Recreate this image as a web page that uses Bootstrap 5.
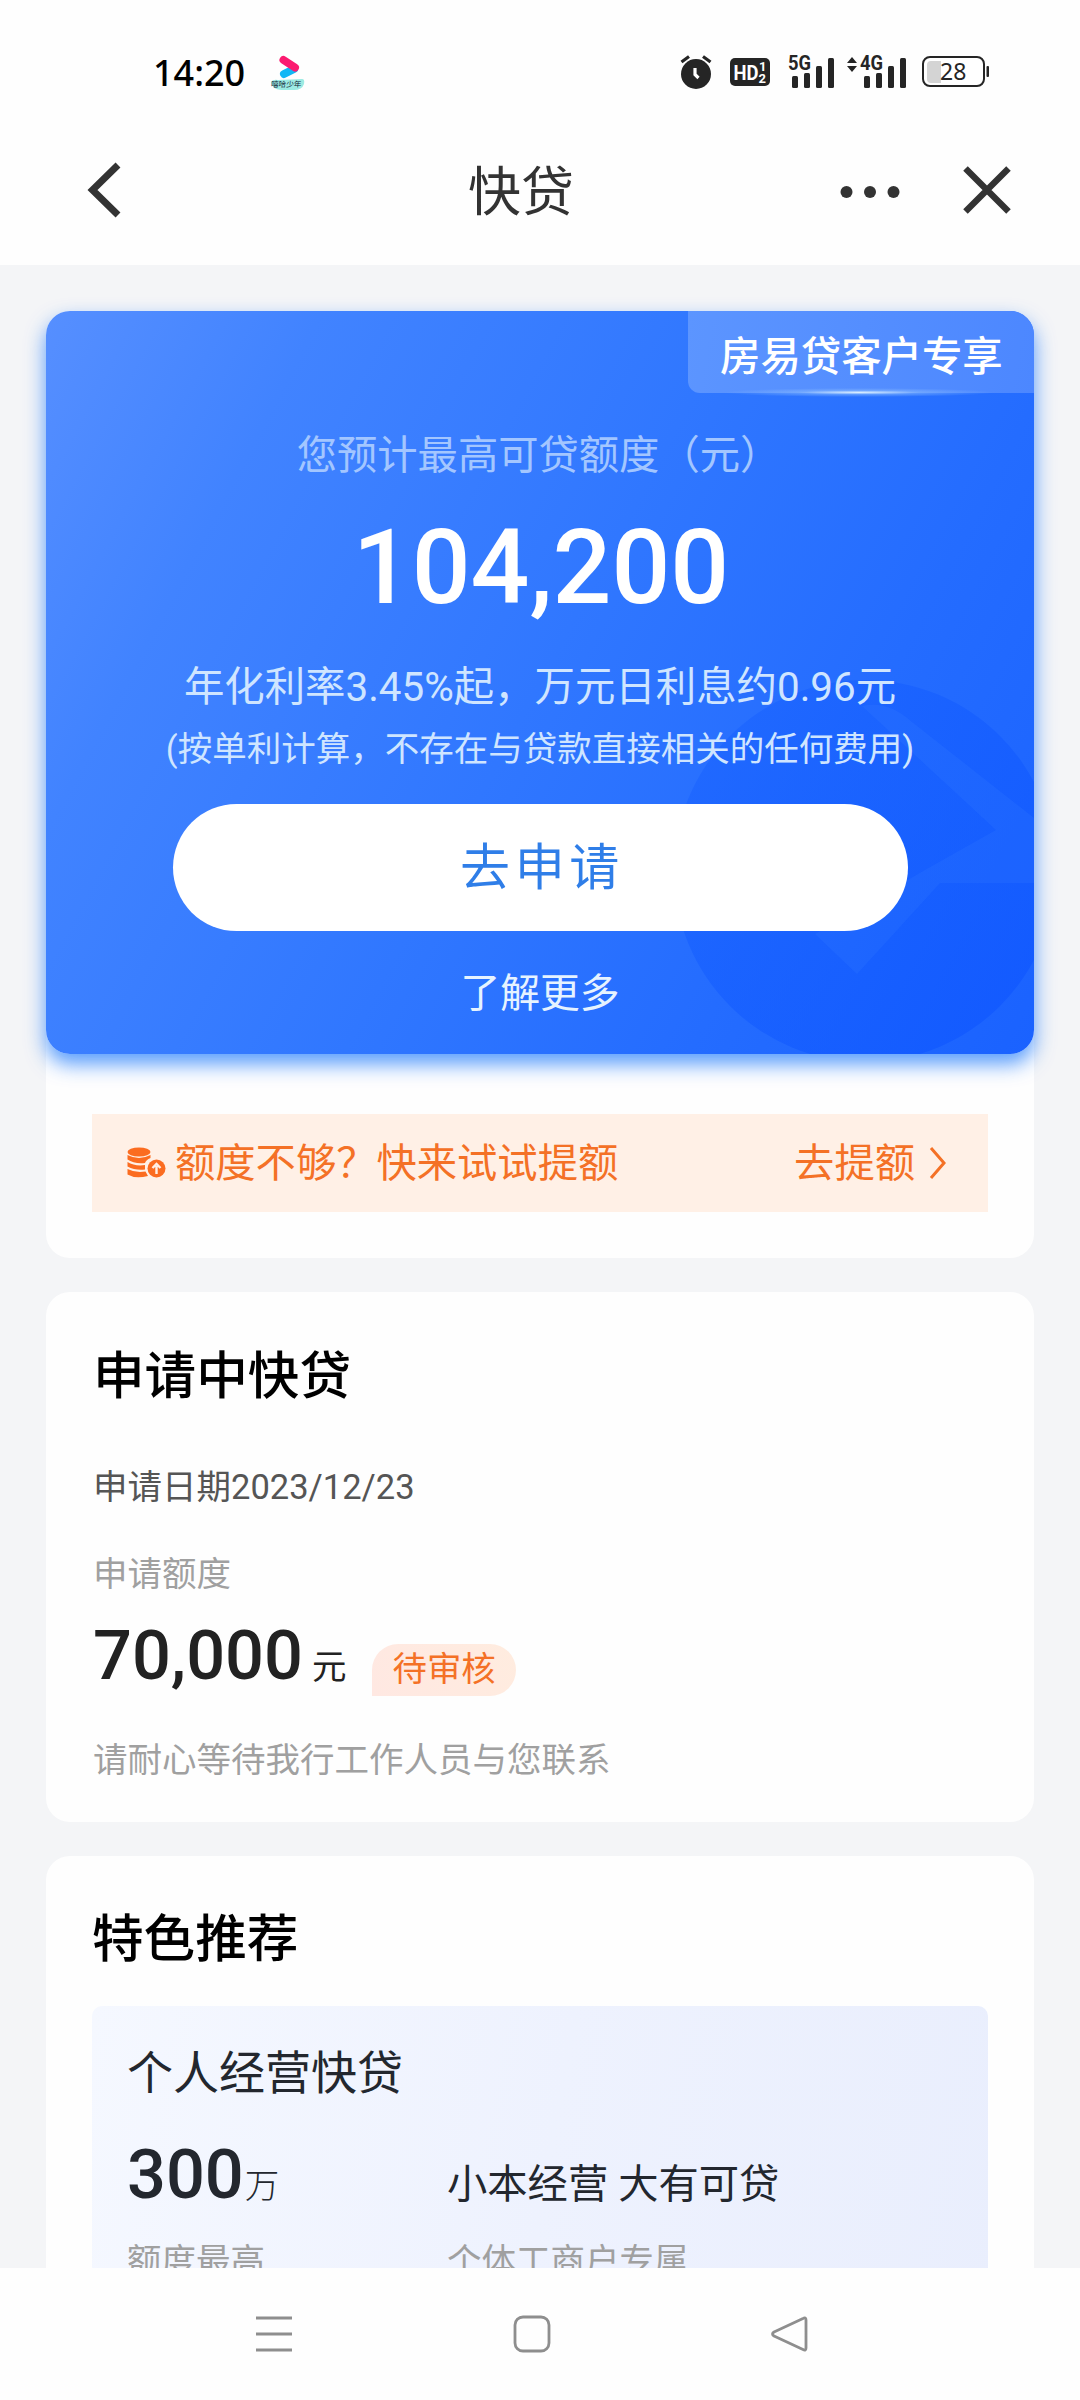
<!DOCTYPE html>
<html lang="zh-CN">
<head>
<meta charset="utf-8">
<meta name="viewport" content="width=device-width, initial-scale=1">
<title>快贷</title>
<link href="https://cdn.jsdelivr.net/npm/bootstrap@5.3.0/dist/css/bootstrap.min.css" rel="stylesheet">
<style>
  body { font-family: Roboto, "Noto Sans CJK SC", sans-serif; height: 2400px; background: #f4f5f7; color: #222; overflow: hidden; }
  svg { display: block; flex: none; overflow: visible; }
  .top-area { height: 265px; background: #fefefe; }
  .status-row { height: 144px; padding: 0 90px 0 153px; }
  .status-time { font: 500 36px/40px "Noto Sans", sans-serif; color: #000; width: 116px; padding-top: 2px; }
  .title-row { height: 94px; padding: 0 68px 0 87px; }
  .page-title { font-size: 53px; line-height: 60px; color: #333; width: 106px; margin-left: 347px; margin-right: 266px; padding-top: 4px; }
  .scroll-area { padding: 46px 46px 0; gap: 34px; height: 2003px; }
  .panel { border: 0; border-radius: 24px; background: #fefefe; flex: none; }
  .hero { height: 743px; border-radius: 24px; background: linear-gradient(118deg, #568fff 0%, #4183ff 20%, #3077ff 50%, #246cff 75%, #1a62ff 100%); box-shadow: 0 10px 20px rgba(22, 118, 252, .72); color: #fff; }
  .hero-mark { right: 0; bottom: 0; }
  .ribbon { top: 0; right: 0; width: 346px; height: 82px; padding-left: 32px; font-size: 40.4px; line-height: 93px; font-weight: 500; background: linear-gradient(100deg, #5c95ff, #4c87ff); border-radius: 0 24px 0 12px; }
  .ribbon-glow { right: 40px; top: 77px; width: 270px; height: 9px; background: radial-gradient(closest-side, rgba(225, 243, 255, .95), rgba(140, 190, 255, .5) 45%, rgba(120, 170, 255, 0)); }
  .hero-body { padding-top: 115px; }
  .hero-label { font-size: 40.3px; line-height: 60px; color: #a3c6ff; padding-right: 3px; }
  .hero-amount { font-size: 103.6px; line-height: 120px; font-weight: 500; margin-top: 22px; padding-left: 2px; }
  .hero-rate { font-size: 40.4px; line-height: 60px; color: #cfe5ff; margin-top: 30px; }
  .hero-note { font-size: 34.5px; line-height: 50px; color: #cfe5ff; margin-top: 6px; }
  .apply-btn { width: 735px; height: 127px; margin-top: 30px; border: 0; background: #fff; color: #2f7ee8; font-size: 50px; letter-spacing: 4.7px; line-height: 129px; padding: 0 0 0 4px; }
  .more-link { font-size: 39.8px; line-height: 60px; color: #e6f3ff; margin-top: 33px; }
  .boost { margin: 60px 46px 46px; height: 98px; padding: 0 41px 0 34px; background: #fff0e6; color: #f47126; font-size: 40.3px; }
  .boost span { padding-top: 2px; }
  .sect-title { font-size: 51.6px; line-height: 70px; font-weight: 500; color: #000; }
  .txt-s { font-size: 34.5px; line-height: 50px; }
  .gray { color: #a0a0a0; }
  .pending { height: 530px; padding: 50px 47px 0; }
  .num { font-size: 68.5px; font-weight: 500; line-height: 80px; }
  .pill { height: 52px; line-height: 51px; padding: 0 20px; border-radius: 26px 26px 26px 0; background: linear-gradient(60deg, #ffe8e2, #ffecdf); color: #f47126; font-size: 34.4px; }
  .special { padding: 49px 46px 0; height: 500px; }
  .offer { height: 400px; margin-top: 31px; padding: 37px 35px 0; border-radius: 10px; background: linear-gradient(100deg, #f5f8ff, #eef2fe 50%, #e9eefd); color: #23272e; }
  .offer-name { font-size: 46px; line-height: 60px; }
  .offer-col { width: 320px; }
  .offer-slogan { font-size: 40.3px; line-height: 60px; margin-top: 20px; font-weight: 400; }
  .bottom-nav { height: 132px; background: #fefefe; padding: 47px 0 0 255px; gap: 220px; }
</style>
<script src="https://cdn.jsdelivr.net/npm/bootstrap@5.3.0/dist/js/bootstrap.bundle.min.js"></script>
</head>
<body class="d-flex flex-column">

<header class="top-area flex-shrink-0">
  <div class="status-row d-flex align-items-center">
    <div class="status-time">14:20</div>
    <svg width="38" height="36" viewBox="0 0 38 36" style="margin-top:4px">
      <path d="M15 18 L25 13" stroke="#10b7f5" stroke-width="8" stroke-linecap="round"/>
      <path d="M14.500 4 L26 11.500" stroke="#fb1b70" stroke-width="8" stroke-linecap="round"/>
      <path d="M2 26 Q4 23 9 24 L33 23 Q36 23 35 28 Q33 34 25 34 L12 34 Q3 33 2 26Z" fill="#9debe3"/>
      <text x="5" y="31" font-family="Noto Sans CJK SC, sans-serif" font-size="7.600" fill="#123" transform="skewX(-6)">嘻哈少年</text>
    </svg>
    <div class="d-flex align-items-center ms-auto">
      <svg width="32" height="36" viewBox="0 0 32 36">
        <circle cx="16" cy="20" r="15" fill="#252525"/>
        <path d="M1.500 8 L9 2.500 M30.500 8 L23 2.500" stroke="#252525" stroke-width="3.200"/>
        <path d="M15 14 V20.500 L18.500 24" stroke="#fff" stroke-width="3.200" fill="none"/>
      </svg>
      <svg width="40" height="28" viewBox="0 0 40 28" style="margin-left:18px">
        <rect width="40" height="28" rx="5" fill="#252525"/>
        <text x="3.500" y="21.500" font-family="Roboto" font-weight="700" font-size="21" textLength="25" lengthAdjust="spacingAndGlyphs" fill="#fff">HD</text>
        <text x="29" y="13" font-family="Roboto" font-weight="700" font-size="13" fill="#fff">1</text>
        <text x="28.500" y="25" font-family="Roboto" font-weight="700" font-size="13" fill="#fff">2</text>
      </svg>
      <svg width="47" height="34" viewBox="0 0 47 34" style="margin-left:18px">
        <text x="0" y="15" font-family="Roboto" font-weight="700" font-size="20" textLength="23" lengthAdjust="spacingAndGlyphs" fill="#252525">5G</text>
        <g fill="#252525"><rect x="4" y="21" width="6" height="12" rx="1.500"/><rect x="16" y="18" width="6" height="15" rx="1.500"/><rect x="28" y="11" width="6" height="22" rx="1.500"/><rect x="40" y="3" width="6" height="30" rx="1.500"/></g>
      </svg>
      <svg width="61" height="34" viewBox="0 0 61 34" style="margin-left:11px">
        <path d="M1 8 L6 2 L11 8Z M1 11 L6 17 L11 11Z" fill="#252525"/>
        <text x="14" y="15" font-family="Roboto" font-weight="700" font-size="20" textLength="23" lengthAdjust="spacingAndGlyphs" fill="#252525">4G</text>
        <g fill="#252525"><rect x="18" y="21" width="6" height="12" rx="1.500"/><rect x="30" y="18" width="6" height="15" rx="1.500"/><rect x="42" y="11" width="6" height="22" rx="1.500"/><rect x="54" y="3" width="6" height="30" rx="1.500"/></g>
      </svg>
      <svg width="68" height="32" viewBox="0 0 68 32" style="margin-left:15px">
        <rect x="1" y="1" width="61" height="29" rx="7" fill="#fff" stroke="#252525" stroke-width="2"/>
        <path d="M9 5 H19 V27 H9 Q5 27 5 23 V9 Q5 5 9 5Z" fill="#d4d4d4"/>
        <rect x="64.500" y="10" width="2.500" height="11" rx="1" fill="#252525"/>
        <text x="18" y="24" font-family="Noto Sans" font-size="23" fill="#252525">28</text>
      </svg>
    </div>
  </div>
  <div class="title-row d-flex align-items-center">
    <svg width="34" height="56" viewBox="0 0 34 56"><path d="M31 2 L5.500 27 L31 52" fill="none" stroke="#333" stroke-width="7"/></svg>
    <div class="page-title text-nowrap">快贷</div>
    <svg width="60" height="14" viewBox="0 0 60 14"><g fill="#333"><circle cx="6.500" cy="8" r="6"/><circle cx="30" cy="8" r="6"/><circle cx="53.500" cy="8" r="6"/></g></svg>
    <svg width="50" height="50" viewBox="0 0 50 50" class="ms-auto"><path d="M3.500 2.500 L46.500 45.500 M46.500 2.500 L3.500 45.500" stroke="#333" stroke-width="6.400"/></svg>
  </div>
</header>

<main class="scroll-area d-flex flex-column overflow-hidden">
  <section class="panel">
    <div class="hero position-relative">
      <svg class="hero-mark position-absolute" width="374" height="400" viewBox="660 654 374 400">
        <defs>
          <clipPath id="corner"><path d="M660 654 H1034 V1030 Q1034 1054 1010 1054 H660Z"/></clipPath>
          <linearGradient id="disc" x1="0" y1="0" x2="1" y2="1"><stop offset="0" stop-color="#0a55ff" stop-opacity=".25"/><stop offset="1" stop-color="#0a50ff" stop-opacity=".5"/></linearGradient>
        </defs>
        <g clip-path="url(#corner)">
          <circle cx="865" cy="871" r="191" fill="url(#disc)"/>
          <path d="M862 706 Q888 700 912 722 L1034 818 V883 H940 L857 974 L815 934 L925 870 L996 830 Z" fill="#4a8cff" opacity=".14"/>
        </g>
      </svg>
      <div class="ribbon position-absolute text-nowrap">房易贷客户专享</div>
      <div class="ribbon-glow position-absolute"></div>
      <div class="hero-body position-relative d-flex flex-column align-items-center text-nowrap">
        <div class="hero-label">您预计最高可贷额度（元）</div>
        <div class="hero-amount">104,200</div>
        <div class="hero-rate">年化利率3.45%起，万元日利息约0.96元</div>
        <div class="hero-note">(按单利计算，不存在与贷款直接相关的任何费用)</div>
        <button class="apply-btn btn rounded-pill" type="button">去申请</button>
        <div class="more-link">了解更多</div>
      </div>
    </div>
    <div class="boost d-flex align-items-center text-nowrap">
      <svg width="41" height="34" viewBox="0 0 41 34">
        <g fill="#fb6c20">
          <ellipse cx="13" cy="6" rx="11.500" ry="4.500"/>
          <path d="M1.500 9 Q13 15 24.500 9 V12 Q20 14 19 17 Q8 18 1.500 13.500Z M1.500 16 Q9 20.500 19 19 V23.500 Q9 24.500 1.500 20.500Z M1.500 23 Q9 27 19.500 25.500 L22 30 Q9 33 1.500 28.500Z"/>
          <circle cx="30.500" cy="22.500" r="9"/>
        </g>
        <path d="M30.500 28 V20 M26.500 22 L30.500 18 L34.500 22" stroke="#fff0e6" stroke-width="2.400" fill="none"/>
      </svg>
      <span class="ms-2">额度不够？快来试试提额</span>
      <span class="ms-auto">去提额</span>
      <svg width="18" height="34" viewBox="0 0 18 34" style="margin-left:14px"><path d="M2 2 L15 17 L2 32" fill="none" stroke="#f47126" stroke-width="3"/></svg>
    </div>
  </section>

  <section class="panel pending text-nowrap">
    <h2 class="sect-title mb-0">申请中快贷</h2>
    <div class="txt-s" style="margin-top:50px;color:#555">申请日期2023/12/23</div>
    <div class="txt-s gray" style="margin-top:37px">申请额度</div>
    <div class="d-flex align-items-center" style="margin-top:17px">
      <span class="num">70,000</span>
      <span class="txt-s" style="margin:22px 0 0 9px">元</span>
      <span class="pill" style="margin:27px 0 0 26px">待审核</span>
    </div>
    <div class="txt-s gray" style="margin-top:39px">请耐心等待我行工作人员与您联系</div>
  </section>

  <section class="panel special text-nowrap">
    <h2 class="sect-title mb-0">特色推荐</h2>
    <div class="offer">
      <div class="offer-name">个人经营快贷</div>
      <div class="d-flex align-items-center" style="margin-top:32px;height:80px">
        <div class="offer-col d-flex align-items-center"><span class="num">300</span><span class="txt-s fw-light" style="margin:21px 0 0 1px">万</span></div>
        <div class="offer-slogan">小本经营 大有可贷</div>
      </div>
      <div class="d-flex txt-s gray" style="margin-top:21px">
        <div class="offer-col">额度最高</div>
        <div>个体工商户专属</div>
      </div>
    </div>
  </section>
</main>

<nav class="bottom-nav d-flex align-items-start">
  <svg width="38" height="38" viewBox="0 0 38 38"><path d="M1 3 H37 M1 19 H37 M1 35 H37" stroke="#8e8e8e" stroke-width="2.800"/></svg>
  <svg width="38" height="38" viewBox="0 0 38 38"><rect x="2" y="2" width="34" height="34" rx="8" fill="none" stroke="#8e8e8e" stroke-width="2.800"/></svg>
  <svg width="38" height="38" viewBox="0 0 38 38"><path d="M32 3.500 Q35 2 35 5 V33 Q35 36 32 34.500 L3 21 Q0 19 3 17Z" fill="none" stroke="#8e8e8e" stroke-width="2.800" stroke-linejoin="round"/></svg>
</nav>
</body>
</html>
